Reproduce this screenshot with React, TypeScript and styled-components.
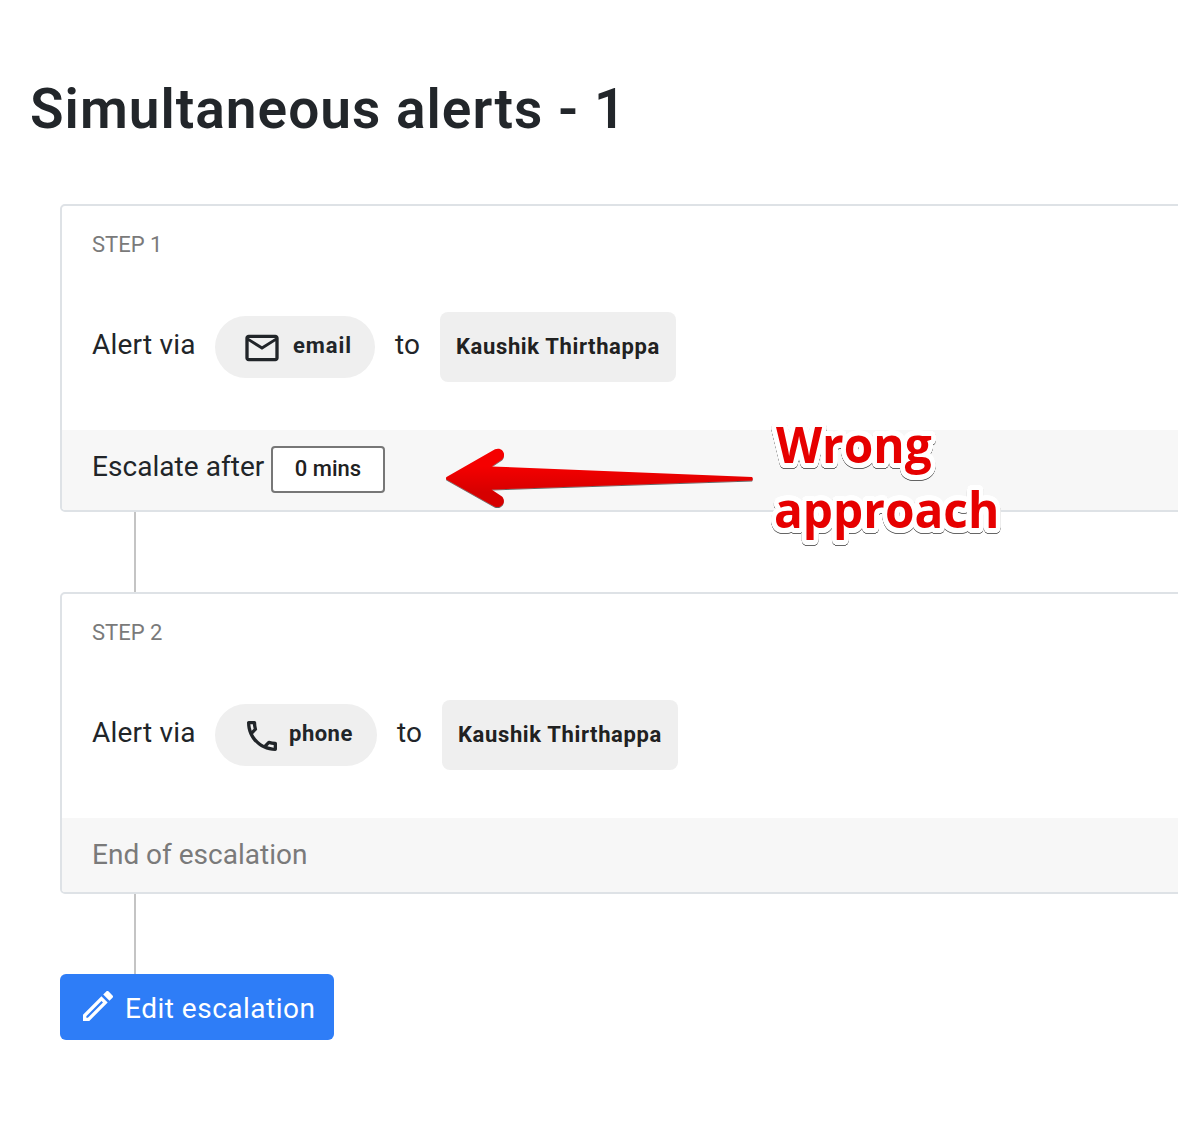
import React from "react";
import styled, { createGlobalStyle } from "styled-components";

const GlobalStyle = createGlobalStyle`
  * { box-sizing: border-box; }
  body {
    margin: 0;
    background: #fff;
    color: #212529;
    font-family: Roboto, "Liberation Sans", sans-serif;
    overflow: hidden;
  }
`;

const Page = styled.main`
  position: relative;
  width: 1178px;
  height: 1140px;
  overflow: hidden;
  padding: 73px 0 0 30px;
`;

const Title = styled.h1`
  margin: 0;
  height: 131px;
  font-size: 55px;
  line-height: 72px;
  font-weight: 600;
  letter-spacing: 1.02px;
  white-space: nowrap;
  color: #22262a;
`;

const Flow = styled.div`
  display: flex;
  flex-direction: column;
  align-items: flex-start;
  margin-left: 30px;
`;

const Card = styled.section`
  width: 1140px;
  border: 2px solid #dee2e6;
  border-radius: 5px;
  overflow: hidden;
`;

const CardBody = styled.div`
  height: 224px;
  padding: 24px 30px 0;
`;

const StepLabel = styled.div`
  height: 82px;
  font-size: 22px;
  line-height: 29px;
  color: #7a7a7a;
  white-space: nowrap;
`;

const AlertRow = styled.div`
  display: flex;
  align-items: center;
  height: 70px;
  font-size: 28px;
  white-space: nowrap;
`;

const Words = styled.span<{ $w: number; $spacing?: number; $lift?: number }>`
  flex: none;
  width: ${(p) => p.$w}px;
  line-height: 36px;
  margin-top: ${(p) => -(p.$lift ?? 4)}px;
  letter-spacing: ${(p) => p.$spacing ?? 0}px;
`;

const Pill = styled.span<{ $w: number; $gap: number }>`
  flex: none;
  display: flex;
  align-items: center;
  gap: ${(p) => p.$gap}px;
  width: ${(p) => p.$w}px;
  height: 62px;
  margin-right: 20px;
  padding-left: 27px;
  border-radius: 31px;
  background: #efefef;
  font-size: 22px;
  font-weight: 700;
`;

const PillText = styled.span<{ $spacing: number }>`
  line-height: 28px;
  margin-top: -2px;
  letter-spacing: ${(p) => p.$spacing}px;
`;

const Person = styled.span`
  flex: none;
  width: 236px;
  height: 70px;
  padding-left: 16px;
  border-radius: 8px;
  background: #efefef;
  color: #212121;
  font-size: 22px;
  line-height: 69px;
  font-weight: 700;
  letter-spacing: 0.63px;
`;

const CardFooter = styled.footer<{ $h: number; $muted?: boolean }>`
  display: flex;
  align-items: center;
  height: ${(p) => p.$h}px;
  padding-left: 30px;
  background: #f7f7f7;
  color: ${(p) => (p.$muted ? "#7a7a7a" : "#212529")};
  font-size: 28px;
  white-space: nowrap;
`;

const Delay = styled.span`
  width: 114px;
  height: 47px;
  margin-top: -1px;
  border: 2px solid #777;
  border-radius: 4px;
  background: #fff;
  color: #212121;
  font-size: 22px;
  line-height: 41px;
  font-weight: 500;
  text-align: center;
`;

const Connector = styled.div`
  width: 2px;
  height: 80px;
  margin-left: 74px;
  background: #c4c4c4;
`;

const EditButton = styled.button`
  display: flex;
  align-items: center;
  gap: 7px;
  width: 274px;
  height: 66px;
  padding: 0 0 0 18px;
  border: 0;
  border-radius: 6px;
  background: #2e7df7;
  color: #fff;
  font: 400 28px Roboto, "Liberation Sans", sans-serif;
  white-space: nowrap;
`;

const EditLabel = styled.span`
  line-height: 36px;
  margin-top: 4px;
  letter-spacing: 0.5px;
`;

const Glyph = styled.svg<{ $drop?: number }>`
  flex: none;
  width: 40px;
  height: 40px;
  margin-top: ${(p) => p.$drop ?? 0}px;
  color: inherit;
  fill: currentColor;
`;

const ArrowMark = styled.svg`
  position: absolute;
  left: 440px;
  top: 440px;
  width: 320px;
  height: 76px;
`;

const OUTLINE = [2.5, 5]
  .flatMap((radius) =>
    Array.from({ length: 32 }, (_, i) => {
      const angle = (i * Math.PI) / 16;
      const x = (Math.cos(angle) * radius).toFixed(2);
      const y = (Math.sin(angle) * radius).toFixed(2);
      return `${x}px ${y}px 0 #fff`;
    })
  )
  .join(", ");

const Note = styled.div`
  position: absolute;
  left: 774px;
  top: 412px;
  font: 700 50px/65px "Open Sans", "Noto Sans", sans-serif;
  color: #e60000;
  text-shadow: ${OUTLINE};
  transform: scaleX(0.955);
  transform-origin: left top;
  filter: drop-shadow(0 1px 0.6px rgba(0, 0, 0, 0.6));
`;

const NoteLine = styled.div<{ $indent: number }>`
  padding-left: ${(p) => p.$indent}px;
  white-space: nowrap;
`;

const MAIL =
  "M22 6C22 4.9 21.1 4 20 4H4C2.9 4 2 4.9 2 6V18C2 19.1 2.9 20 4 20H20C21.1 20 22 19.1 22 18V6M20 6L12 11L4 6H20M20 18H4V8L12 13L20 8V18Z";
const PHONE =
  "M20,15.5C18.8,15.5 17.5,15.3 16.4,14.9C16.3,14.9 16.2,14.9 16.1,14.9C15.8,14.9 15.6,15 15.4,15.2L13.2,17.4C10.4,15.9 8,13.6 6.6,10.8L8.8,8.6C9.1,8.3 9.2,7.9 9,7.6C8.7,6.5 8.5,5.2 8.5,4C8.5,3.5 8,3 7.5,3H4C3.5,3 3,3.5 3,4C3,13.4 10.6,21 20,21C20.5,21 21,20.5 21,20V16.5C21,16 20.5,15.5 20,15.5M5,5H6.5C6.6,5.9 6.8,6.8 7,7.6L5.8,8.8C5.4,7.6 5.1,6.3 5,5M19,19C17.7,18.9 16.4,18.6 15.2,18.2L16.4,17C17.2,17.2 18.1,17.4 19,17.4V19Z";
const PENCIL =
  "M14.06,9L15,9.94L5.92,19H5V18.08L14.06,9M17.66,3C17.41,3 17.15,3.1 16.96,3.29L15.13,5.12L18.88,8.87L20.71,7.04C21.1,6.65 21.1,6 20.71,5.63L18.37,3.29C18.17,3.09 17.92,3 17.66,3M14.06,6.19L3,17.25V21H6.75L17.81,9.94L14.06,6.19Z";

const Icon = ({ d, drop }: { d: string; drop?: number }) => (
  <Glyph viewBox="0 0 24 24" $drop={drop} aria-hidden="true">
    <path d={d} />
  </Glyph>
);

type StepProps = {
  label: string;
  channel: string;
  icon: string;
  pillWidth: number;
  gap: number;
  spacing: number;
  footer: React.ReactNode;
};

const Step = ({ label, channel, icon, pillWidth, gap, spacing, footer }: StepProps) => (
  <Card>
    <CardBody>
      <StepLabel>{label}</StepLabel>
      <AlertRow>
        <Words $w={123} $spacing={0.2}>Alert via</Words>
        <Pill $w={pillWidth} $gap={gap}>
          <Icon d={icon} drop={2} />
          <PillText $spacing={spacing}>{channel}</PillText>
        </Pill>
        <Words $w={45}>to</Words>
        <Person>Kaushik Thirthappa</Person>
      </AlertRow>
    </CardBody>
    {footer}
  </Card>
);

export default function App() {
  return (
    <>
      <GlobalStyle />
      <Page>
        <Title>Simultaneous alerts - 1</Title>
        <Flow>
          <Step
            label="STEP 1"
            channel="email"
            icon={MAIL}
            pillWidth={160}
            gap={11}
            spacing={0.9}
            footer={
              <CardFooter $h={80}>
                <Words $w={179} $spacing={0.05} $lift={6}>Escalate after</Words>
                <Delay>0 mins</Delay>
              </CardFooter>
            }
          />
          <Connector />
          <Step
            label="STEP 2"
            channel="phone"
            icon={PHONE}
            pillWidth={162}
            gap={7}
            spacing={0.5}
            footer={
              <CardFooter $h={74} $muted>
                <Words $w={230} $lift={0}>End of escalation</Words>
              </CardFooter>
            }
          />
          <Connector />
          <EditButton>
            <Icon d={PENCIL} drop={-2} />
            <EditLabel>Edit escalation</EditLabel>
          </EditButton>
        </Flow>
        <ArrowMark viewBox="440 440 320 76">
          <defs>
            <linearGradient id="arrowRed" x1="0" y1="0" x2="0" y2="1">
              <stop offset="0.3" stopColor="#f50505" />
              <stop offset="0.75" stopColor="#d60000" />
            </linearGradient>
            <filter id="arrowShade" x="-5%" y="-10%" width="110%" height="125%">
              <feDropShadow dx="0" dy="1" stdDeviation="0.5" floodColor="#000" floodOpacity="0.6" />
            </filter>
          </defs>
          <path
            filter="url(#arrowShade)"
            fill="url(#arrowRed)"
            d="M446.5 477 L495 449.3 C502 446.5 507 454 502 459.5 L491.5 466.5 L752 477 Q753.5 478.5 752 480.5 L491.5 489.5 L502 496.5 C507 502 501 509 494.5 506.5 L446.5 479.5 Q445.5 478 446.5 477Z"
          />
        </ArrowMark>
        <Note>
          <NoteLine $indent={2}>Wrong</NoteLine>
          <NoteLine $indent={0}>approach</NoteLine>
        </Note>
      </Page>
    </>
  );
}
